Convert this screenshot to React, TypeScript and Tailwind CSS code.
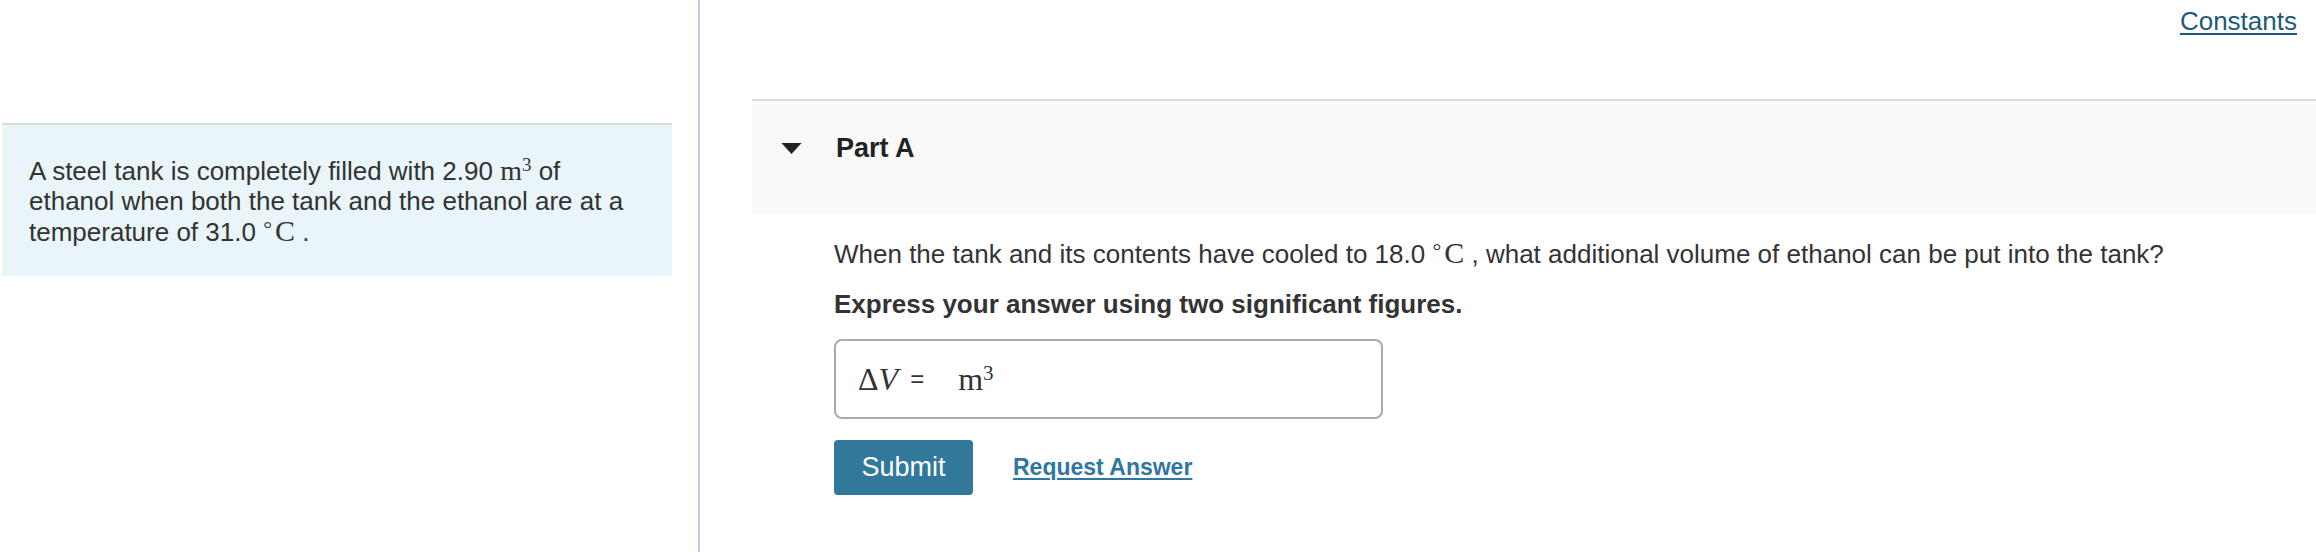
import React from "react";

const sans = "font-['Liberation_Sans',Arial,sans-serif]";
const serif = "font-['Liberation_Serif','Times_New_Roman',serif]";

function DegC() {
  return (
    <span className={`${serif} text-[30px]`}>
      <span className="relative -top-[5px] mr-[3px] text-[22px]">°</span>C
    </span>
  );
}

function Cubic() {
  return (
    <span className={`${serif} text-[28px]`}>
      m<sup className="text-[19px]">3</sup>
    </span>
  );
}

function Caret() {
  return (
    <svg viewBox="0 0 22 12" className="h-[11px] w-[21px]">
      <path d="M0 0h22L11 12z" fill="#222" />
    </svg>
  );
}

export default function App() {
  return (
    <div className={`flex h-[552px] w-[2316px] bg-white text-[#333] ${sans}`}>
      <div className="w-[698px] shrink-0 pl-[2px] pt-[123px]">
        <div className="w-[670px] border-t-2 border-[#dcdcdc] bg-[#e9f5f8] pb-[27px] pl-[27px] pr-[24px] pt-[31px] text-[26px] leading-[30px]">
          A steel tank is completely filled with 2.90 <Cubic /> of ethanol when both the tank and the ethanol are at a temperature of 31.0 <DegC /> .
        </div>
      </div>

      <div className="h-full w-[2px] shrink-0 bg-[#c0cedb]" />

      <div className="flex min-w-0 flex-1 flex-col pl-[52px]">
        <div className="flex justify-end pr-[19px] pt-[6px] text-[26px] leading-[30px]">
          <a className="text-[#1d5a79] underline decoration-2 underline-offset-[3px]" href="#">
            Constants
          </a>
        </div>

        <div className="mt-[63px] flex items-center border-t-2 border-[#dddddd] bg-[#f9f9f9] pb-[49px] pl-[29px] pt-[31px]">
          <Caret />
          <div className="ml-[34px] text-[27px] font-bold leading-[32px] text-[#222]">Part A</div>
        </div>

        <div className="flex flex-col pl-[82px]">
          <p className="mt-[24px] text-[26px] leading-[32px]">
            When the tank and its contents have cooled to 18.0 <DegC /> , what additional volume of ethanol can be put into the tank?
          </p>
          <p className="mt-[16px] text-[26px] font-bold leading-[32px]">Express your answer using two significant figures.</p>

          <div className="mt-[19px] flex h-[80px] w-[549px] items-center rounded-[8px] border-2 border-[#aaaaaa] pl-[22px]">
            <span className={`${serif} text-[32px]`}>
              Δ<i>V</i>
            </span>
            <span className="ml-[12px] text-[24px]">=</span>
            <span className="ml-[34px]">
              <span className={`${serif} text-[32px]`}>
                m<sup className="text-[21px]">3</sup>
              </span>
            </span>
          </div>

          <div className="mt-[21px] flex items-center">
            <button className="h-[55px] w-[139px] rounded-[4px] bg-[#32789a] text-[27px] text-white" type="button">
              Submit
            </button>
            <a className="ml-[40px] text-[23px] font-bold text-[#2f76a0] underline decoration-2 underline-offset-[3px]" href="#">
              Request Answer
            </a>
          </div>
        </div>
      </div>
    </div>
  );
}
